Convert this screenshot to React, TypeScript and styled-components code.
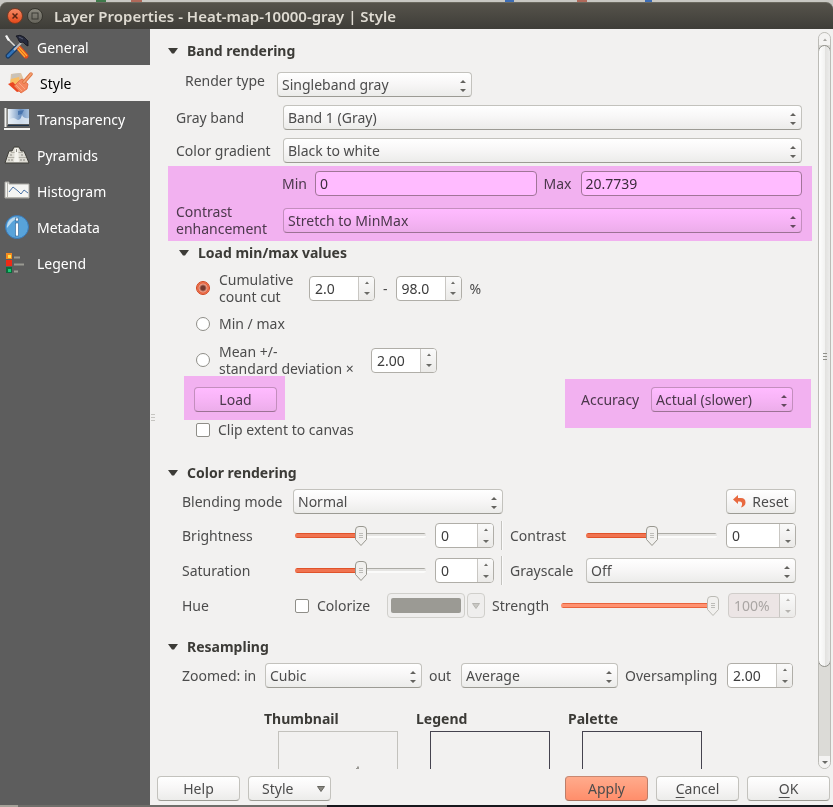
import React, { useState } from "react";
import styled, { createGlobalStyle, css } from "styled-components";

const GlobalStyle = createGlobalStyle`
  *, *::before, *::after { box-sizing: border-box; }
  body {
    margin: 0;
    font: 14px/17px "Noto Sans", "Open Sans", sans-serif;
    color: #4c4c4c;
    background: #c9c8c3;
  }
  button, input, select { font: inherit; color: inherit; margin: 0; }
`;

/* ---------- window frame ---------- */

const Desktop = styled.div`
  height: 100vh;
  display: flex;
  flex-direction: column;
  padding-top: 2px;
  background: linear-gradient(90deg, #c9c8c3 0 96px, #3f7a4b 96px 106px, #c9c8c3 106px 131px, #b0695a 131px 142px, #c9c8c3 142px 505px, #3d6db5 505px 514px, #c9c8c3 514px 577px, #b0695a 577px 587px, #c9c8c3 587px 645px, #3d6db5 645px 652px, #c9c8c3 652px);
`;

const TitleBar = styled.header`
  flex: none;
  height: 27px;
  display: flex;
  align-items: center;
  gap: 4px;
  padding-left: 7px;
  border-top: 1px solid #6b695f;
  border-radius: 7px 7px 0 0;
  background: linear-gradient(#56534b, #3e3d38);
`;

const WindowButton = styled.button<{ $close?: boolean }>`
  width: 16px;
  height: 16px;
  padding: 0;
  display: grid;
  place-items: center;
  border: 1px solid ${(p) => (p.$close ? "#7d3a22" : "#37362f")};
  border-radius: 50%;
  background: ${(p) => (p.$close ? "linear-gradient(#f58a65, #e5491a)" : "linear-gradient(#8a887e, #66645b)")};
`;

const Title = styled.h1`
  margin: 0 0 0 7px;
  font-size: 15px;
  line-height: 20px;
  font-weight: 600;
  color: #dfdbd2;
  white-space: nowrap;
`;

const Body = styled.div`
  flex: 1;
  min-height: 0;
  display: flex;
  background: #f2f1f0;
`;

const BottomEdge = styled.div`
  flex: none;
  height: 2px;
  background: linear-gradient(90deg, #a5a299 0 18px, #6f6e6a 18px 327px, #17171c 327px);
`;

/* ---------- sidebar ---------- */

const Sidebar = styled.nav`
  flex: none;
  width: 150px;
  background: #5d5d5d;
`;

const NavItem = styled.button<{ $active?: boolean }>`
  width: 100%;
  height: 36px;
  display: flex;
  align-items: center;
  gap: 7px;
  padding: 0 0 0 ${(p) => (p.$active ? 7 : 4)}px;
  border: 0;
  color: ${(p) => (p.$active ? "#000" : "#fff")};
  background: ${(p) => (p.$active ? "#f2f1f0" : "transparent")};
  svg { flex: none; }
`;

const Splitter = styled.div`
  flex: none;
  width: 7px;
  display: flex;
  flex-direction: column;
  justify-content: center;
  gap: 2px;
  padding-left: 1px;
`;

const Grip = styled.i<{ $dark?: boolean }>`
  width: 4px;
  height: 1px;
  background: ${(p) => (p.$dark ? "#8f8f89" : "#c6c5c1")};
`;

/* ---------- main pane ---------- */

const Main = styled.main`
  flex: 1;
  min-width: 0;
  display: flex;
  flex-direction: column;
`;

const ScrollArea = styled.div`
  flex: 1;
  min-height: 0;
  display: flex;
  gap: 6px;
  padding: 0 2px 0 11px;
`;

const Content = styled.div`
  flex: 1;
  min-width: 0;
  padding-top: 12px;
  overflow: hidden auto;
  scrollbar-width: none;
`;

const GroupTitle = styled.h2<{ $top?: number; $inset?: number }>`
  display: flex;
  align-items: center;
  gap: 9px;
  height: 20px;
  margin: ${(p) => p.$top ?? 0}px 0 0 ${(p) => p.$inset ?? 0}px;
  font-size: 14px;
  line-height: 20px;
  font-weight: 700;
  color: #3c3b37;
`;

const Row = styled.div<{ $top: number; $left: number; $right?: number; $gap?: number; $align?: string }>`
  display: flex;
  align-items: ${(p) => p.$align ?? "center"};
  gap: ${(p) => p.$gap ?? 0}px;
  margin-top: ${(p) => p.$top}px;
  padding: 0 ${(p) => p.$right ?? 0}px 0 ${(p) => p.$left}px;
`;

const Label = styled.label<{ $width?: number }>`
  flex: none;
  width: ${(p) => (p.$width ? `${p.$width}px` : "auto")};
  white-space: nowrap;
`;

const Marker = css`
  position: relative;
  &::after {
    content: "";
    position: absolute;
    background: #ffbbff;
    mix-blend-mode: multiply;
    pointer-events: none;
  }
`;

const MarkedBlock = styled.div`
  ${Marker}
  margin-top: 3px;
  padding: 5px 0 4px;
  &::after { inset: 0; }
`;

const MarkedButton = styled.div`
  ${Marker}
  display: flex;
  &::after { inset: -11px -8px -8px -10px; }
`;

const MarkedField = styled.div`
  ${Marker}
  display: flex;
  align-items: center;
  margin-left: auto;
  &::after { inset: -8px -18px -16px -16px; }
`;

/* ---------- controls ---------- */

const raised = css`
  border: 1px solid #c3c2bd;
  border-bottom-color: #9c9b94;
  border-radius: 4px;
  background: linear-gradient(#ffffff, #f8f7f7 45%, #ececea);
`;

const SelectBox = styled.span<{ $width?: number }>`
  position: relative;
  display: flex;
  min-width: 0;
  flex: ${(p) => (p.$width ? `none` : "1")};
  width: ${(p) => (p.$width ? `${p.$width}px` : "auto")};
  svg { position: absolute; right: 5px; top: 7px; pointer-events: none; }
`;

const SelectInput = styled.select`
  ${raised}
  appearance: none;
  width: 100%;
  height: 25px;
  padding: 0 18px 0 4px;
  line-height: 21px;
`;

const TextInput = styled.input`
  flex: 1;
  min-width: 0;
  width: 0;
  height: 25px;
  padding: 0 4px;
  line-height: 21px;
  color: #3c3c3c;
  border: 1px solid #a19f98;
  border-radius: 4px;
  background: #fff;
`;

const SpinBox = styled.span<{ $width: number; $disabled?: boolean }>`
  flex: none;
  width: ${(p) => p.$width}px;
  height: 25px;
  display: flex;
  overflow: hidden;
  border: 1px solid ${(p) => (p.$disabled ? "#d0cdca" : "#b0aea8")};
  border-radius: 4px;
  color: ${(p) => (p.$disabled ? "#aaa6a4" : "#3c3c3c")};
  background: ${(p) => (p.$disabled ? "#ece5e5" : "#fff")};
  input {
    flex: 1;
    width: 0;
    min-width: 0;
    padding: 0 0 0 5px;
    line-height: 21px;
    border: 0;
    background: transparent;
  }
`;

const SpinButtons = styled.span`
  width: 16px;
  display: flex;
  flex-direction: column;
  border-left: 1px solid #c9c7c3;
  background: linear-gradient(#fafafa, #ebeae8);
  button {
    flex: 1;
    display: grid;
    place-items: center;
    padding: 0;
    border: 0;
    background: none;
  }
`;

const Button = styled.button<{ $width: number; $primary?: boolean; $menu?: boolean }>`
  ${raised}
  flex: none;
  width: ${(p) => p.$width}px;
  height: 25px;
  padding: ${(p) => (p.$menu ? "0 5px 0 13px" : "0")};
  display: flex;
  align-items: center;
  justify-content: ${(p) => (p.$menu ? "space-between" : "center")};
  gap: 6px;
  white-space: nowrap;
  ${(p) =>
    p.$primary &&
    css`
      border-color: #c98871 #bd7e69 #a8705d;
      background: linear-gradient(#ffab8c, #ff8e6b);
    `}
  u { text-underline-offset: 3px; text-decoration-thickness: 1px; }
`;

const Radio = styled.input`
  appearance: none;
  flex: none;
  width: 14px;
  height: 14px;
  border: 1px solid #8f8e88;
  border-radius: 50%;
  background: #fff;
  &:checked {
    border-color: #d0421b;
    background: radial-gradient(circle, #74392e 0 2px, #f3a089 4px, #e5603b 5px, #f0805f 6px);
  }
`;

const Check = styled.input`
  appearance: none;
  flex: none;
  width: 14px;
  height: 14px;
  border: 1px solid #8f8e88;
  border-radius: 2px;
  background: #fff;
  &:checked { background: #e5603b; }
`;

const thumb = (stroke: string, fill: string) =>
  `url("data:image/svg+xml,${encodeURIComponent(
    `<svg xmlns='http://www.w3.org/2000/svg' width='12' height='20'><path d='M.5 4Q.5.5 4 .5H8Q11.5.5 11.5 4V13.5L6 19.5L.5 13.5Z' fill='${fill}' stroke='${stroke}'/><path d='M4 7.5H8M4 9.5H8M4 11.5H8' stroke='#bdbcb8'/></svg>`
  )}")`;

const Range = styled.input`
  appearance: none;
  flex: 1;
  width: 100%;
  min-width: 0;
  height: 20px;
  background: transparent;
  &::-webkit-slider-runnable-track {
    height: 5px;
    border-radius: 3px;
    background:
      linear-gradient(#e0532a 0 1px, #f07350 1px 4px, #e0532a 4px) 0 0 / var(--fill) 100% no-repeat,
      linear-gradient(#acaba5 0 1px, #e6e5e3 1px 3px, #fbfbfa 3px);
  }
  &::-webkit-slider-thumb {
    appearance: none;
    width: 12px;
    height: 20px;
    margin-top: -7px;
    background: ${thumb("#98978f", "#f1f0ee")} no-repeat;
  }
  &:disabled::-webkit-slider-runnable-track {
    background: linear-gradient(#e8643d 0 1px, #ff9170 1px 4px, #e8643d 4px);
  }
  &:disabled::-webkit-slider-thumb {
    background: ${thumb("#bbbab4", "#f1f0ee")} no-repeat;
  }
`;

const TuningGrid = styled.div`
  display: grid;
  grid-template-columns: 113px minmax(0, 1fr) 68px 16px 76px minmax(0, 1fr) 79px;
  row-gap: 10px;
  align-items: center;
  margin-top: 9px;
  padding: 0 16px 0 14px;
  ${SpinBox} { justify-self: end; }
`;

const WideCell = styled.div`
  grid-column: span 2;
  display: flex;
`;

const Divider = styled.i`
  justify-self: center;
  width: 2px;
  height: 29px;
  margin: -2px 0;
  border-left: 1px solid #c4c3bf;
  border-right: 1px solid #fafafa;
`;

const ColorButton = styled.button`
  flex: none;
  width: 78px;
  height: 25px;
  padding: 4px 3px;
  border: 1px solid #d0cfcb;
  border-radius: 4px;
  background: #efeeed;
  &::before {
    content: "";
    display: block;
    height: 100%;
    border-radius: 2px;
    background: #9b9a94;
  }
`;

const MenuButton = styled.button`
  flex: none;
  width: 18px;
  height: 25px;
  margin: 0 7px 0 2px;
  padding: 0;
  display: grid;
  place-items: center;
  border: 1px solid #d0cfcb;
  border-radius: 4px;
  background: #efeeed;
`;

/* ---------- previews, scrollbar, footer ---------- */

const Previews = styled.div`
  display: flex;
  gap: 32px;
  margin-top: 21px;
  padding-left: 96px;
`;

const Preview = styled.figure<{ $faint?: boolean }>`
  margin: 0;
  width: 120px;
  figcaption {
    height: 20px;
    line-height: 20px;
    font-weight: 700;
    color: #3c3b37;
  }
  div {
    width: 120px;
    height: 120px;
    margin: 2px 0 0 14px;
    border: 1px solid ${(p) => (p.$faint ? "#c3c2bd" : "#45434f")};
  }
  svg { display: block; }
`;

const ScrollBar = styled.div`
  flex: none;
  width: 13px;
  margin-top: 3px;
  display: flex;
  flex-direction: column;
  border: 1px solid #bcbbb6;
  border-radius: 7px;
  overflow: hidden;
  background: #dcdbd7;
  button {
    height: 12px;
    padding: 0;
    display: grid;
    place-items: center;
    border: 0;
    background: #f4f3f2;
  }
`;

const ScrollThumb = styled.div`
  flex: 7;
  margin: 0 -1px;
  display: flex;
  flex-direction: column;
  align-items: center;
  justify-content: center;
  gap: 2px;
  border: 1px solid #8f8f89;
  border-radius: 7px;
  background: linear-gradient(90deg, #fdfdfd, #f3f3f2 50%, #e2e1df 55%, #ececeb);
`;

const Trough = styled.div`
  flex: 1;
`;

const Footer = styled.footer`
  flex: none;
  display: flex;
  gap: 8px;
  padding: 7px 3px 4px 0;
`;

const Spacer = styled.div`
  flex: 1;
`;

/* ---------- drawings ---------- */

const Up = ({ c = "#6a6a66" }: { c?: string }) => (
  <svg width="6" height="3"><path d="M1 3L3 .5L5 3Z" fill={c} /></svg>
);
const Down = ({ c = "#6a6a66" }: { c?: string }) => (
  <svg width="6" height="3"><path d="M0 0H6L3 3Z" fill={c} /></svg>
);
const Expander = () => (
  <svg width="10" height="6"><path d="M0 0H10L6 5.5H4Z" fill="#3c3b37" /></svg>
);
const MenuArrow = ({ c = "#8a8983", edge = "#66655f" }: { c?: string; edge?: string }) => (
  <svg width="8" height="6"><path d="M.5 .5H7.5L4 5.5Z" fill={c} stroke={edge} strokeWidth="1" /></svg>
);

const ToolsIcon = () => (
  <svg width="26" height="26" viewBox="0 0 26 26">
    <path d="M3 4L14 15" stroke="#dededb" strokeWidth="1.500" />
    <path d="M1 2L3 1L6 6L4 7Z" fill="#f5f5f5" />
    <path d="M12 14L4 22" stroke="#173a63" strokeWidth="5" strokeLinecap="round" />
    <path d="M12 14L4 22" stroke="#3173b9" strokeWidth="2.500" strokeLinecap="round" />
    <path d="M15 14L22 22" stroke="#e04a20" strokeWidth="5" strokeLinecap="round" />
    <path d="M15 13L23 22M14 15L21 23" stroke="#ffb12c" strokeWidth="1.200" />
    <path d="M10 16L18 8" stroke="#b9b9bb" strokeWidth="2" />
    <path d="M12 2Q16 0 20 3L24 7V12L22 11L19 8L17 9L15 7Q14 4 12 2Z" fill="#272b3d" stroke="#11131d" strokeWidth=".8" />
    <path d="M15 3L19 5" stroke="#5a6075" />
  </svg>
);
const BrushIcon = () => (
  <svg width="26" height="26" viewBox="0 0 26 26">
    <path d="M4 4L14 3L18 12L8 16L3 13Z" fill="#e0c3a0" />
    <path d="M5 4L13 3L12 9L4 11Z" fill="#c9c2b8" />
    <path d="M4 9L12 7L13 14L3 15Z" fill="#f9bd62" />
    <path d="M1 14L6 12L14 21L10 22Z" fill="#ea4722" />
    <path d="M12 11L15 9L21 14L20 19L14 23L7 16Z" fill="#f4865c" stroke="#e2673c" strokeWidth=".8" />
    <path d="M17 12L24 4" stroke="#dd7440" strokeWidth="3.500" strokeLinecap="round" />
    <path d="M17 12L24 4" stroke="#f6a173" strokeWidth="1.800" strokeLinecap="round" />
    <path d="M9 15L15 21M12 13L18 19" stroke="#fbb08c" strokeWidth=".8" />
  </svg>
);
const TransparencyIcon = () => (
  <svg width="26" height="24" viewBox="0 0 26 24">
    <defs>
      <linearGradient id="sky" x1="0" x2="1" y1="0" y2="0">
        <stop offset="0" stopColor="#eef4fa" /><stop offset=".6" stopColor="#6d93c2" /><stop offset="1" stopColor="#a9c2de" />
      </linearGradient>
    </defs>
    <rect x="4" y="2" width="21" height="15" fill="url(#sky)" />
    <path d="M4 14Q8 9 12 12T18 8Q20 12 25 11V17H4Z" fill="#e6eef5" opacity=".8" />
    <path d="M14 4L20 3L18 7L14 8Z" fill="#3e6ba6" opacity=".8" />
    <path d="M1.500 1V20M0 22H26" stroke="#f2f2ef" strokeWidth="2" />
    <path d="M4 18.500H25" stroke="#1c3148" />
    <path d="M3.500 2V18" stroke="#8b8b86" />
  </svg>
);
const PyramidIcon = () => (
  <svg width="26" height="20" viewBox="0 0 26 20">
    <path d="M10 2H15L17 6H20L25 18H1L5 6H8Z" fill="#dfddd5" stroke="#3f3e39" />
    <path d="M7 7.500H19M4 12.500H22" stroke="#b4b2a9" />
    <path d="M11 3H14L15 17H10Z" fill="#f4f3ee" />
    <path d="M7 9V11M18 9V11M5 14V16M8 14V16M17 14V16M20 14V16M12.500 4V7" stroke="#8d8b83" />
  </svg>
);
const HistogramIcon = () => (
  <svg width="26" height="20" viewBox="0 0 26 20">
    <path d="M1 1H5V3H25V17H1Z" fill="#f5f5f3" stroke="#aaa9a4" />
    <path d="M3.500 1V17M1 16.500H25" stroke="#b5b4ae" />
    <path d="M5 11L9 6L14 10L17 13L20 9L24 12" fill="none" stroke="#4a72a5" />
  </svg>
);
const InfoIcon = () => (
  <svg width="26" height="26" viewBox="0 0 26 26">
    <circle cx="13" cy="13" r="11.500" fill="#58a3da" stroke="#3a78b5" />
    <path d="M3 14A10 10 0 0 1 14 3Q8 7 3 14Z" fill="#b9d9ef" />
    <rect x="11.500" y="4" width="3" height="3" fill="#fff" stroke="#285a8c" strokeWidth=".6" />
    <rect x="11.500" y="9" width="3" height="13" fill="#fff" stroke="#285a8c" strokeWidth=".6" />
  </svg>
);
const LegendIcon = () => (
  <svg width="26" height="24" viewBox="0 0 26 24">
    <path d="M10 6.500H16M10 13.500H20M10 20.500H14" stroke="#9a9a92" strokeWidth="2" />
    <rect x="2" y="2" width="6" height="6" fill="#f58a1f" /><rect x="4" y="4" width="3" height="3" fill="#ffe14a" />
    <rect x="2" y="9" width="6" height="6" fill="#ee2a16" />
    <rect x="2" y="16" width="6" height="6" fill="#0b6b3b" /><rect x="4" y="18" width="3" height="3" fill="#19c774" />
  </svg>
);
const UndoIcon = () => (
  <svg width="13" height="13" viewBox="0 0 13 13">
    <path d="M0 4.500L5 0V3H8Q12.500 3 12.500 7.500Q12.500 11 8 12.500Q9.500 10 9 8Q8.500 6.500 7 6.500H5V9Z" fill="#e8693f" />
  </svg>
);

/* ---------- composed fields ---------- */

function Select({ id, value, width, label }: { id: string; value: string; width?: number; label?: string }) {
  return (
    <SelectBox $width={width}>
      <SelectInput id={id} aria-label={label} defaultValue={value}>
        <option>{value}</option>
      </SelectInput>
      <svg width="8" height="13"><path d="M1 4L4 1L7 4ZM1 10H7L4 13Z" fill="#63625e" /></svg>
    </SelectBox>
  );
}

function Spin({ id, value, width, label, disabled }: { id: string; value: string; width: number; label?: string; disabled?: boolean }) {
  const [text, setText] = useState(value);
  const step = (by: number) => {
    const digits = (text.split(".")[1] ?? "").length;
    setText((parseFloat(text) + by).toFixed(digits));
  };
  const c = disabled ? "#b5b3af" : undefined;
  return (
    <SpinBox $width={width} $disabled={disabled}>
      <input id={id} aria-label={label} value={text} disabled={disabled} onChange={(e) => setText(e.target.value)} />
      <SpinButtons>
        <button aria-label="Increase" disabled={disabled} onClick={() => step(1)}><Up c={c} /></button>
        <button aria-label="Decrease" disabled={disabled} onClick={() => step(-1)}><Down c={c} /></button>
      </SpinButtons>
    </SpinBox>
  );
}

function Slider({ id, start, disabled }: { id: string; start: number; disabled?: boolean }) {
  const [value, setValue] = useState(start);
  return (
    <Range
      id={id}
      type="range"
      min={0}
      max={100}
      value={value}
      disabled={disabled}
      onChange={(e) => setValue(Number(e.target.value))}
      style={{ "--fill": `${value}%` } as React.CSSProperties}
    />
  );
}

const pages = [
  { name: "General", icon: <ToolsIcon /> },
  { name: "Style", icon: <BrushIcon /> },
  { name: "Transparency", icon: <TransparencyIcon /> },
  { name: "Pyramids", icon: <PyramidIcon /> },
  { name: "Histogram", icon: <HistogramIcon /> },
  { name: "Metadata", icon: <InfoIcon /> },
  { name: "Legend", icon: <LegendIcon /> },
];

export default function App() {
  return (
    <Desktop>
      <GlobalStyle />
      <TitleBar>
        <WindowButton $close aria-label="Close">
          <svg width="6" height="6"><path d="M.5.5L5.500 5.500M5.500.5L.5 5.500" stroke="#5a2412" strokeWidth="1.500" /></svg>
        </WindowButton>
        <WindowButton aria-label="Maximize">
          <svg width="8" height="8"><rect x="1" y="1" width="6" height="6" fill="none" stroke="#3b3a34" /></svg>
        </WindowButton>
        <Title>Layer Properties - Heat-map-10000-gray | Style</Title>
      </TitleBar>
      <Body>
        <Sidebar>
          {pages.map((p) => (
            <NavItem key={p.name} $active={p.name === "Style"}>
              {p.icon}
              {p.name}
            </NavItem>
          ))}
        </Sidebar>
        <Splitter><Grip /><Grip /><Grip /></Splitter>
        <Main>
          <ScrollArea>
            <Content>
              <GroupTitle><Expander />Band rendering</GroupTitle>
              <Row $top={11} $left={17} $align="flex-start">
                <Label $width={92} htmlFor="render">Render type</Label>
                <Select id="render" value="Singleband gray" width={195} />
              </Row>
              <Row $top={8} $left={8} $right={10}>
                <Label $width={107} htmlFor="band">Gray band</Label>
                <Select id="band" value="Band 1 (Gray)" />
              </Row>
              <Row $top={8} $left={8} $right={10}>
                <Label $width={107} htmlFor="gradient">Color gradient</Label>
                <Select id="gradient" value="Black to white" />
              </Row>
              <MarkedBlock>
                <Row $top={0} $left={114} $right={10}>
                  <Label $width={33} htmlFor="min">Min</Label>
                  <TextInput id="min" defaultValue="0" />
                  <Row as="span" $top={0} $left={7}>
                    <Label $width={37} htmlFor="max">Max</Label>
                  </Row>
                  <TextInput id="max" defaultValue="20.7739" />
                </Row>
                <Row $top={7} $left={8} $right={10}>
                  <Label $width={107} htmlFor="contrastMode">Contrast<br />enhancement</Label>
                  <Select id="contrastMode" value="Stretch to MinMax" />
                </Row>
              </MarkedBlock>

              <GroupTitle $top={2} $inset={11}><Expander />Load min/max values</GroupTitle>
              <Row $top={8} $left={28} $gap={9}>
                <Radio type="radio" name="range" id="cumulative" defaultChecked />
                <Label $width={81} htmlFor="cumulative">Cumulative<br />count cut</Label>
                <Row $top={0} $left={0} $gap={8}>
                  <Spin id="low" label="Lower percent" value="2.0" width={66} />
                  <span>-</span>
                  <Spin id="high" label="Upper percent" value="98.0" width={66} />
                  <span>%</span>
                </Row>
              </Row>
              <Row $top={10} $left={28} $gap={9}>
                <Radio type="radio" name="range" id="minmax" />
                <Label htmlFor="minmax">Min / max</Label>
              </Row>
              <Row $top={11} $left={28} $gap={9}>
                <Radio type="radio" name="range" id="mean" />
                <Label $width={143} htmlFor="mean">Mean +/-<br />standard deviation ×</Label>
                <Spin id="deviation" label="Deviation factor" value="2.00" width={66} />
              </Row>
              <Row $top={10} $left={26} $right={19}>
                <MarkedButton><Button $width={83}>Load</Button></MarkedButton>
                <MarkedField>
                  <Label $width={70} htmlFor="accuracy">Accuracy</Label>
                  <Select id="accuracy" value="Actual (slower)" width={142} />
                </MarkedField>
              </Row>
              <Row $top={9} $left={28} $gap={8}>
                <Check type="checkbox" id="clip" />
                <Label htmlFor="clip">Clip extent to canvas</Label>
              </Row>

              <GroupTitle $top={25}><Expander />Color rendering</GroupTitle>
              <Row $top={6} $left={14} $right={16}>
                <Label $width={111} htmlFor="blend">Blending mode</Label>
                <Select id="blend" value="Normal" width={210} />
                <Spacer />
                <Button $width={70}><UndoIcon />Reset</Button>
              </Row>
              <TuningGrid>
                <Label htmlFor="brightness">Brightness</Label>
                <Slider id="brightness" start={50} />
                <Spin id="brightnessValue" label="Brightness value" value="0" width={59} />
                <Divider />
                <Label htmlFor="contrast">Contrast</Label>
                <Slider id="contrast" start={50} />
                <Spin id="contrastValue" label="Contrast value" value="0" width={70} />
                <Label htmlFor="saturation">Saturation</Label>
                <Slider id="saturation" start={50} />
                <Spin id="saturationValue" label="Saturation value" value="0" width={59} />
                <Divider />
                <Label htmlFor="grayscale">Grayscale</Label>
                <WideCell><Select id="grayscale" value="Off" /></WideCell>
              </TuningGrid>
              <Row $top={10} $left={14} $right={16}>
                <Label $width={113} htmlFor="colorize">Hue</Label>
                <Row $top={0} $left={0} $gap={8}>
                  <Check type="checkbox" id="colorize" />
                  <Label $width={70} htmlFor="colorize">Colorize</Label>
                </Row>
                <ColorButton disabled aria-label="Colorize color" />
                <MenuButton disabled aria-label="Color menu"><MenuArrow c="#c9c8c4" edge="#b5b4b0" /></MenuButton>
                <Label $width={69} htmlFor="strength">Strength</Label>
                <Slider id="strength" start={100} disabled />
                <Row $top={0} $left={9}>
                  <Spin id="strengthValue" label="Strength value" value="100%" width={68} disabled />
                </Row>
              </Row>

              <GroupTitle $top={19}><Expander />Resampling</GroupTitle>
              <Row $top={6} $left={14} $right={19}>
                <Label $width={83} htmlFor="zoomIn">Zoomed: in</Label>
                <Select id="zoomIn" value="Cubic" />
                <Row $top={0} $left={7}>
                  <Label $width={32} htmlFor="zoomOut">out</Label>
                </Row>
                <Select id="zoomOut" value="Average" />
                <Row $top={0} $left={7}>
                  <Label $width={102} htmlFor="oversampling">Oversampling</Label>
                </Row>
                <Spin id="oversampling" value="2.00" width={66} />
              </Row>
              <Previews>
                <Preview $faint>
                  <figcaption>Thumbnail</figcaption>
                  <div>
                    <svg width="118" height="118"><path d="M78 35.500h2M77 37h3M74 44l5 4" stroke="#9a9994" strokeWidth="2" /></svg>
                  </div>
                </Preview>
                <Preview><figcaption>Legend</figcaption><div /></Preview>
                <Preview><figcaption>Palette</figcaption><div /></Preview>
              </Previews>
            </Content>
            <ScrollBar>
              <button aria-label="Scroll up"><Up c="#a5a4a0" /></button>
              <ScrollThumb><Grip $dark /><Grip $dark /><Grip $dark /></ScrollThumb>
              <Trough />
              <button aria-label="Scroll down"><Down /></button>
            </ScrollBar>
          </ScrollArea>
          <Footer>
            <Button $width={83}>Help</Button>
            <Button $width={83} $menu>Style<MenuArrow /></Button>
            <Spacer />
            <Button $width={83} $primary>Apply</Button>
            <Button $width={83}><span><u>C</u>ancel</span></Button>
            <Button $width={83}><span><u>O</u>K</span></Button>
          </Footer>
        </Main>
      </Body>
      <BottomEdge />
    </Desktop>
  );
}
